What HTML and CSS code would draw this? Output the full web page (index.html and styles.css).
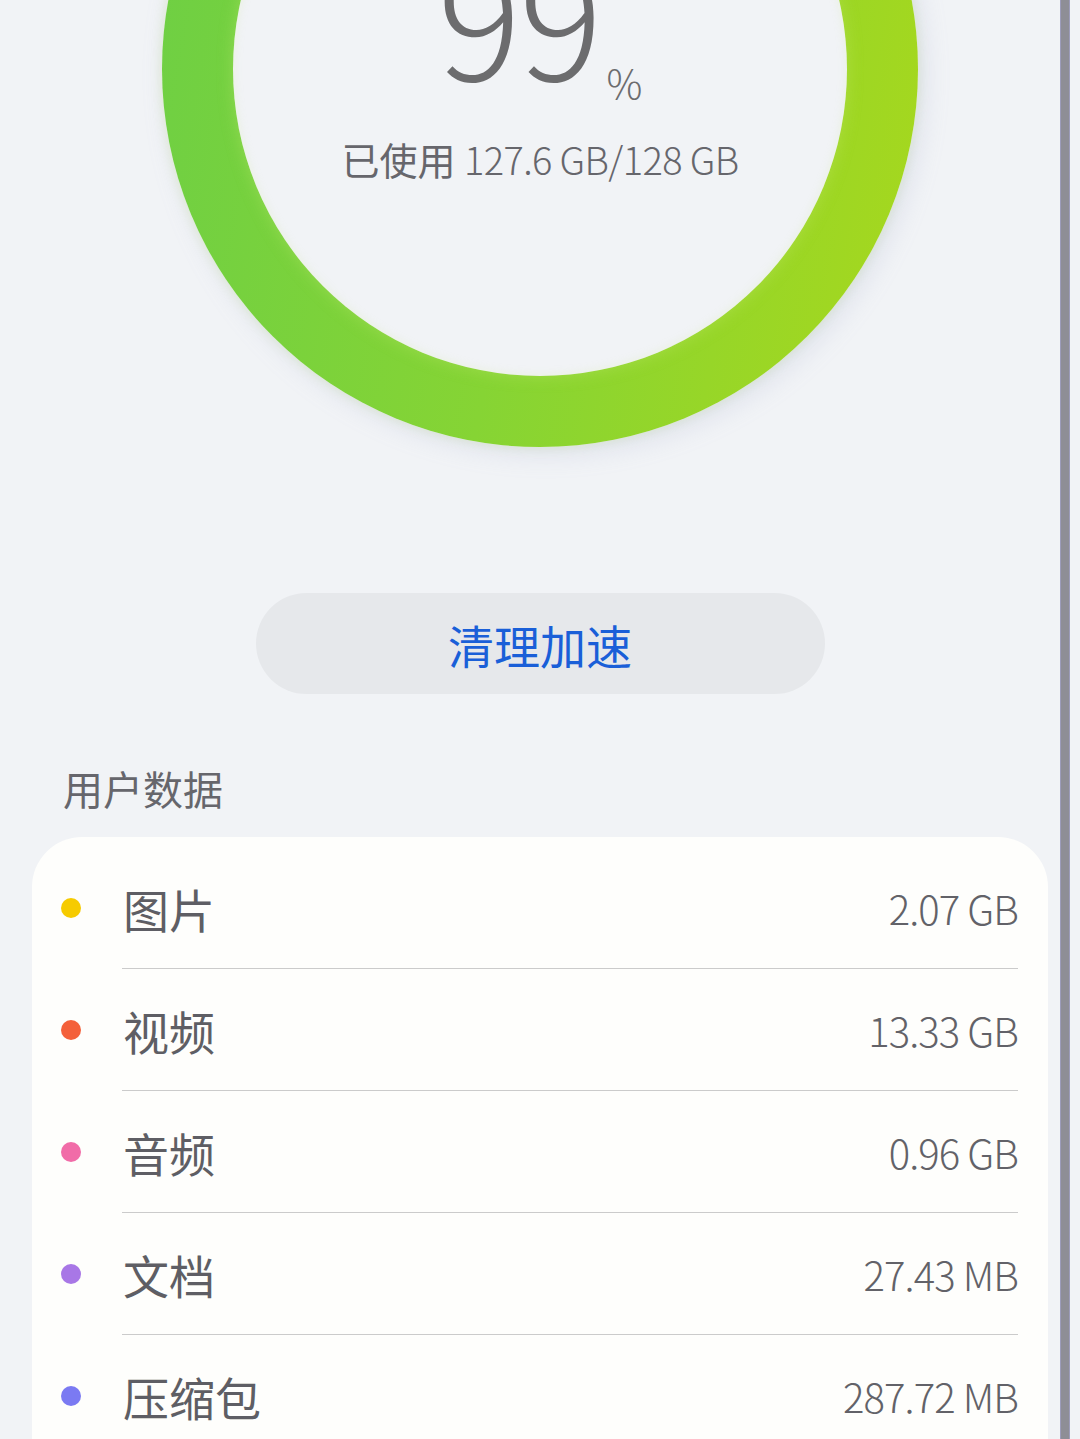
FILE: index.html
```html
<!DOCTYPE html>
<html lang="zh-CN">
<head>
<meta charset="utf-8">
<title>存储空间</title>
<link rel="stylesheet" href="styles.css">
</head>
<body>
<div class="page">
  <section class="hero">
    <div class="ring">
      <div class="ring-inner">
        <div class="percent"><span class="num">99</span><span class="pct">%</span></div>
        <div class="used">已使用 <span class="digits">127.6 GB/128 GB</span></div>
      </div>
    </div>
  </section>

  <button class="clean-btn" type="button">清理加速</button>

  <h2 class="section-title">用户数据</h2>

  <ul class="card">
    <li class="row"><span class="dot dot-yellow"></span><span class="label">图片</span><span class="value">2.07 GB</span></li>
    <li class="row"><span class="dot dot-orange"></span><span class="label">视频</span><span class="value">13.33 GB</span></li>
    <li class="row"><span class="dot dot-pink"></span><span class="label">音频</span><span class="value">0.96 GB</span></li>
    <li class="row"><span class="dot dot-purple"></span><span class="label">文档</span><span class="value">27.43 MB</span></li>
    <li class="row"><span class="dot dot-blue"></span><span class="label">压缩包</span><span class="value">287.72 MB</span></li>
  </ul>
</div>
<div class="edge-bar"></div>
</body>
</html>
```

FILE: styles.css
```css
* { box-sizing: border-box; }

html, body {
  margin: 0;
  padding: 0;
  height: 100%;
  overflow: hidden;
  background: #f1f3f6;
  font-family: "Noto Sans CJK SC", "Noto Sans", sans-serif;
}

.page {
  display: flex;
  flex-direction: column;
  align-items: center;
  width: 1080px;
}

.hero {
  margin-top: -309px;
  display: flex;
  justify-content: center;
}

.ring {
  width: 756px;
  height: 756px;
  border-radius: 50%;
  padding: 71px;
  background: linear-gradient(100deg, #6ccf45 0%, #86d434 50%, #a8d81c 100%);
  box-shadow: 6px 6px 26px rgba(150, 160, 200, 0.22), 0 0 12px rgba(170, 220, 60, 0.22);
}

.ring-inner {
  width: 100%;
  height: 100%;
  border-radius: 50%;
  background: #f1f3f6;
  box-shadow: 0 0 16px rgba(200, 235, 120, 0.35), inset 0 0 10px rgba(210, 235, 150, 0.25);
  display: flex;
  flex-direction: column;
  align-items: center;
  padding-top: 173px;
}

.percent {
  height: 155px;
  display: flex;
  align-items: baseline;
  justify-content: center;
  line-height: 1;
  color: #6c6c6e;
}

.num {
  font-size: 156px;
  font-weight: 300;
  line-height: 1;
  letter-spacing: -2px;
}

.pct {
  font-size: 40px;
  font-weight: 300;
  line-height: 1;
  margin-left: 6px;
  position: relative;
  top: 18px;
}

.used {
  margin-top: 50px;
  font-size: 38px;
  line-height: 1;
  color: #66666c;
  font-weight: 400;
}

.used .digits {
  font-weight: 300;
  letter-spacing: -0.6px;
}

.clean-btn {
  margin-top: 146px;
  width: 569px;
  height: 101px;
  border: none;
  border-radius: 51px;
  background: #e6e8eb;
  color: #1a5fd8;
  font-family: inherit;
  font-size: 46px;
  line-height: 1;
  padding: 0;
  cursor: pointer;
}

.section-title {
  align-self: flex-start;
  margin: 74px 0 0 63px;
  font-size: 40px;
  font-weight: 400;
  line-height: 1;
  color: #66666c;
}

.card {
  list-style: none;
  margin: 29px 0 0 0;
  padding: 10px 30px 0 29px;
  width: 1016px;
  background: #fefefc;
  border-radius: 50px 50px 0 0;
}

.row {
  display: flex;
  align-items: center;
  height: 122px;
  position: relative;
}

.row::after {
  content: "";
  position: absolute;
  left: 61px;
  right: 0;
  bottom: 0;
  height: 1px;
  background: #cbcbcb;
}

.dot {
  width: 20px;
  height: 20px;
  border-radius: 50%;
  flex: none;
}

.dot-yellow { background: #f6cb00; }
.dot-orange { background: #f4603a; }
.dot-pink { background: #f16ca8; }
.dot-purple { background: #a877e6; }
.dot-blue { background: #7b7af2; }

.label {
  margin-left: 42px;
  font-size: 46px;
  line-height: 1;
  color: #5e5e64;
  flex: 1;
}

.value {
  font-size: 40px;
  font-weight: 300;
  line-height: 1;
  letter-spacing: -0.9px;
  color: #626268;
}

.edge-bar {
  position: fixed;
  top: 0;
  bottom: 0;
  right: 10px;
  width: 10px;
  background: #8e8e96;
  border-left: 1px solid #9c9cba;
  border-right: 1px solid #9c9cba;
}
```
